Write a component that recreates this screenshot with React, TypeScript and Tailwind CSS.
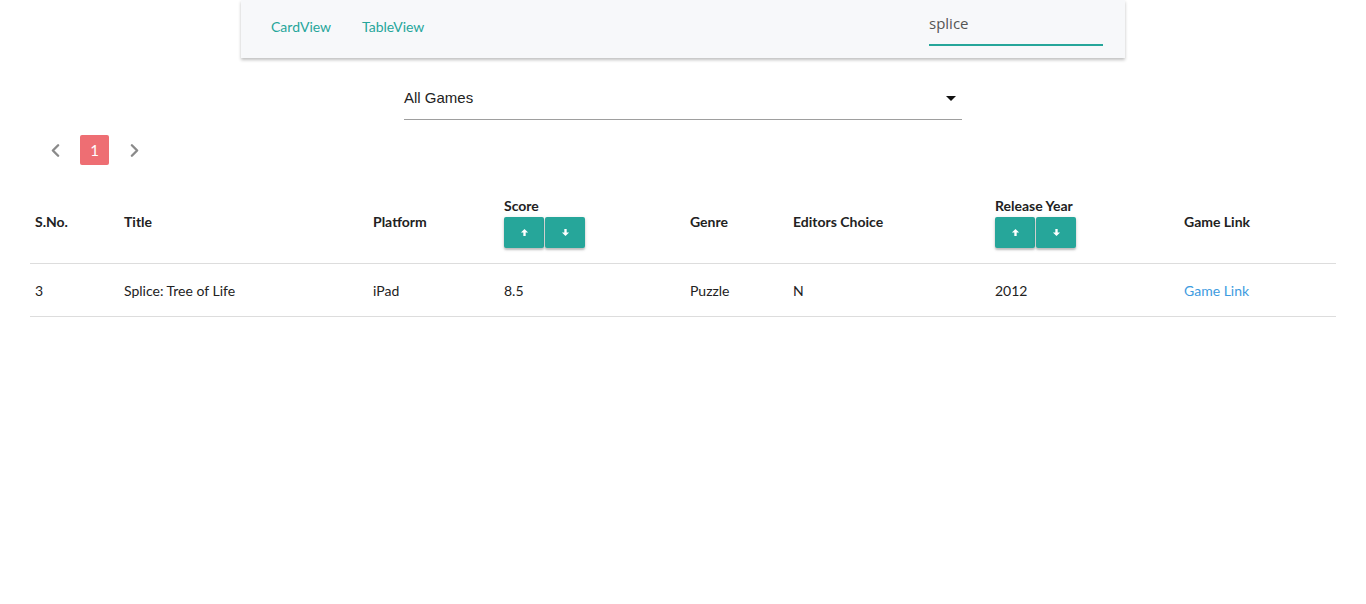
import { ChevronLeft, ChevronRight } from 'lucide-react'

const COLS = 'grid grid-cols-[89px_249px_131px_186px_103px_202px_189px_1fr]'

const games = [
  { sno: 3, title: 'Splice: Tree of Life', platform: 'iPad', score: '8.5', genre: 'Puzzle', editors: 'N', year: 2012 },
]

function Arrow({ up }: { up: boolean }) {
  return (
    <svg width="9" height="9" viewBox="0 0 10 10" className={up ? '' : 'rotate-180'}>
      <path d="M5 1 L9 5 H6.3 V9 H3.7 V5 H1 Z" fill="white" />
    </svg>
  )
}

function SortButtons() {
  return (
    <div className="flex gap-px mt-[1px]">
      <button type="button" className="w-[40px] h-[31px] flex items-center justify-center bg-[#26a69a] rounded-[2px] shadow-[0_2px_2px_rgba(0,0,0,0.2),0_1px_4px_rgba(0,0,0,0.12)]">
        <Arrow up />
      </button>
      <button type="button" className="w-[40px] h-[31px] flex items-center justify-center bg-[#26a69a] rounded-[2px] shadow-[0_2px_2px_rgba(0,0,0,0.2),0_1px_4px_rgba(0,0,0,0.12)]">
        <Arrow up={false} />
      </button>
    </div>
  )
}

export default function App() {
  return (
    <div className="min-h-screen bg-white font-['Lato','Noto_Sans',sans-serif] text-[14px] text-[rgba(0,0,0,0.87)]">
      <nav className="mx-auto w-[884px] h-[58px] bg-[#f7f8fa] shadow-[0_2px_3px_rgba(0,0,0,0.25)] flex items-start px-[30px]">
        <div className="flex gap-[31px] text-[#26a69a] mt-[17px] leading-[20px]">
          <span>CardView</span>
          <span>TableView</span>
        </div>
        <div className="ml-auto w-[174px] mr-[-8px] mt-[12px]">
          <div className="h-[22px] text-[15px] text-[#555] font-['Open_Sans',sans-serif] leading-[22px]">splice</div>
          <div className="h-[2px] bg-[#26a69a] mt-[10px]" />
        </div>
      </nav>

      <div className="mx-auto w-[558px] mt-[28px] border-b border-[#9e9e9e] h-[34px] flex items-center justify-between font-['Liberation_Sans',sans-serif] text-[15px] text-[#222]">
        <span className="mt-[-9px]">All Games</span>
        <span className="mr-[6px] mt-[-9px] w-0 h-0 border-l-[5px] border-r-[5px] border-t-[5px] border-l-transparent border-r-transparent border-t-[#111]" />
      </div>

      <div className="flex items-center mt-[15px] ml-[45px]">
        <ChevronLeft size={21} strokeWidth={2.75} className="text-[#8a8a8a]" />
        <div className="ml-[14px] w-[29px] h-[30px] bg-[#ee6e73] rounded-[2px] text-white flex items-center justify-center text-[15px]">1</div>
        <ChevronRight size={21} strokeWidth={2.75} className="ml-[15px] text-[#8a8a8a]" />
      </div>

      <div className="mx-[30px] mt-[15px]">
        <div className={`${COLS} items-center border-b border-[#ddd] h-[84px] font-bold text-[#222]`}>
          <div className="pl-[5px]">S.No.</div>
          <div className="pl-[5px]">Title</div>
          <div className="pl-[5px]">Platform</div>
          <div className="pl-[5px]">
            <div className="leading-[20px]">Score</div>
            <SortButtons />
          </div>
          <div className="pl-[5px]">Genre</div>
          <div className="pl-[5px]">Editors Choice</div>
          <div className="pl-[5px]">
            <div className="leading-[20px]">Release Year</div>
            <SortButtons />
          </div>
          <div className="pl-[5px]">Game Link</div>
        </div>
        {games.map((g) => (
          <div key={g.sno} className={`${COLS} items-center border-b border-[#ddd] h-[53px] text-[#222]`}>
            <div className="pl-[5px]">{g.sno}</div>
            <div className="pl-[5px]">{g.title}</div>
            <div className="pl-[5px]">{g.platform}</div>
            <div className="pl-[5px]">{g.score}</div>
            <div className="pl-[5px]">{g.genre}</div>
            <div className="pl-[5px]">{g.editors}</div>
            <div className="pl-[5px]">{g.year}</div>
            <div className="pl-[5px]">
              <a href="#" className="text-[#3d9be0]">Game Link</a>
            </div>
          </div>
        ))}
      </div>
    </div>
  )
}
